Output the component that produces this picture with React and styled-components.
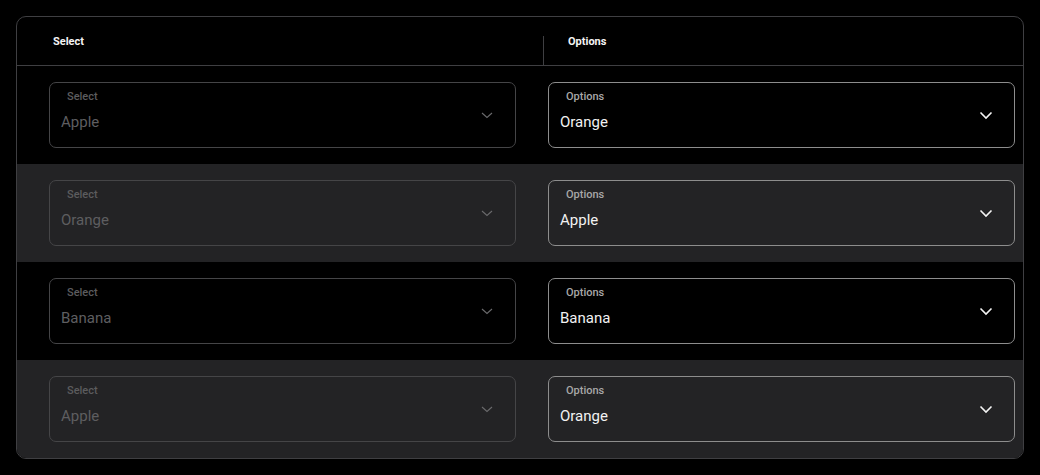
import styled, { createGlobalStyle } from 'styled-components';

const GlobalStyle = createGlobalStyle`
  body {
    margin: 0;
    background: #000000;
    font-family: Roboto, 'Noto Sans', sans-serif;
  }
`;

const rows = [
  { select: 'Apple', option: 'Orange' },
  { select: 'Orange', option: 'Apple' },
  { select: 'Banana', option: 'Banana' },
  { select: 'Apple', option: 'Orange' },
];

const Chevron = ({ disabled }) => (
  <ChevronIcon viewBox="0 0 16 16" $disabled={disabled}>
    <path
      d={disabled ? 'M3 6 L8 10.5 L13 6' : 'M2.5 5.5 L8 11 L13.5 5.5'}
      fill="none"
      stroke="currentColor"
      strokeWidth={disabled ? 1.1 : 1.6}
    />
  </ChevronIcon>
);

const Dropdown = ({ label, value, disabled }) => (
  <Field $disabled={disabled}>
    <FieldLabel $disabled={disabled}>{label}</FieldLabel>
    <FieldValue $disabled={disabled}>{value}</FieldValue>
    <Chevron disabled={disabled} />
  </Field>
);

const App = () => {
  return (
    <Page>
      <GlobalStyle />
      <Card>
        <HeaderRow>
          <HeaderCell>Select</HeaderCell>
          <HeaderCell $divider>Options</HeaderCell>
        </HeaderRow>
        {rows.map((row, i) => (
          <Row key={i} $alt={i % 2 === 1}>
            <FirstCell>
              <Dropdown label="Select" value={row.select} disabled />
            </FirstCell>
            <SecondCell>
              <Dropdown label="Options" value={row.option} />
            </SecondCell>
          </Row>
        ))}
      </Card>
    </Page>
  );
};

export default App;

const Page = styled.div`
  padding: 16px;
  width: 1008px;
`;

const Card = styled.div`
  border: 1px solid #3f3f42;
  border-radius: 10px;
  overflow: hidden;
  background: #000000;
`;

const HeaderRow = styled.div`
  display: grid;
  grid-template-columns: 526px 1fr;
  height: 48px;
  border-bottom: 1px solid #3f3f42;
`;

const HeaderCell = styled.div`
  display: flex;
  align-items: center;
  padding-left: ${(p) => (p.$divider ? '24px' : '36px')};
  margin-top: ${(p) => (p.$divider ? '19px' : '0')};
  border-left: ${(p) => (p.$divider ? '1px solid #3f3f42' : 'none')};
  padding-bottom: ${(p) => (p.$divider ? '19px' : '0')};
  color: #f4f4f4;
  font-size: 11px;
  font-weight: 700;
  line-height: 1;
`;

const Row = styled.div`
  display: grid;
  grid-template-columns: 526px 1fr;
  height: 98px;
  background: ${(p) => (p.$alt ? '#232325' : '#000000')};
`;

const FirstCell = styled.div`
  padding: 16px 27px 16px 32px;
`;

const SecondCell = styled.div`
  padding: 16px 8px 16px 5px;
`;

const Field = styled.div`
  position: relative;
  box-sizing: border-box;
  height: 66px;
  border: 1px solid ${(p) => (p.$disabled ? '#454547' : '#8d8d8d')};
  border-radius: 7px;
  padding: 7px 12px 0 11px;
`;

const FieldLabel = styled.div`
  padding-left: 6px;
  font-size: 11px;
  font-weight: 500;
  line-height: 14px;
  color: ${(p) => (p.$disabled ? '#5c5c5e' : '#a8a8a8')};
`;

const FieldValue = styled.div`
  margin-top: 9px;
  font-size: 15px;
  line-height: 18px;
  color: ${(p) => (p.$disabled ? '#5e5e60' : '#f2f2f2')};
`;

const ChevronIcon = styled.svg`
  position: absolute;
  right: 20px;
  top: 24px;
  width: 16px;
  height: 16px;
  color: ${(p) => (p.$disabled ? '#6a6a6c' : '#f4f4f4')};
`;
